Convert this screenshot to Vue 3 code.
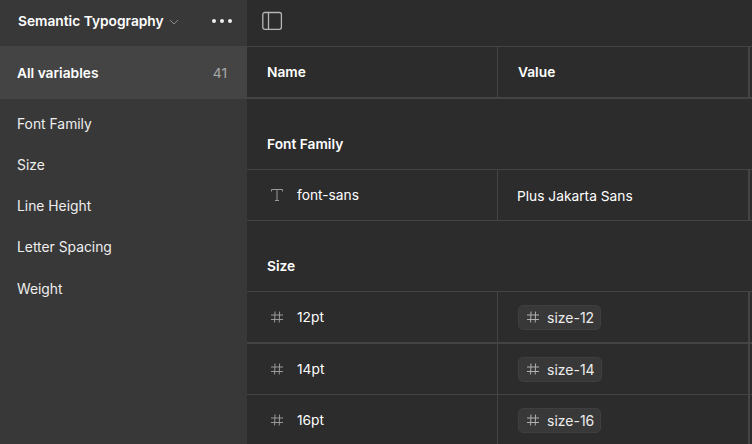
<script setup>
const groups = ['Font Family', 'Size', 'Line Height', 'Letter Spacing', 'Weight']
const sizes = [
  { name: '12pt', value: 'size-12', thick: true },
  { name: '14pt', value: 'size-14' },
  { name: '16pt', value: 'size-16' }
]
</script>

<template>
  <div class="app">
    <aside class="sidebar">
      <div class="side-head">
        <div class="collection">
          <span>Semantic Typography</span>
          <svg class="chevron" width="10" height="6" viewBox="0 0 10 6"><path d="M1 1l4 4 4-4" fill="none" stroke="#8a8a8a" /></svg>
        </div>
        <div class="dots"><i></i><i></i><i></i></div>
      </div>
      <div class="all-row">
        <span>All variables</span>
        <span class="count">41</span>
      </div>
      <nav class="groups">
        <div v-for="g in groups" :key="g" class="group-link">{{ g }}</div>
      </nav>
    </aside>

    <main class="main">
      <div class="toolbar">
        <svg width="22" height="19" viewBox="0 0 22 19" fill="none" stroke="#b5b5b5" stroke-width="1.3">
          <rect x="1.800" y="1.500" width="18.600" height="16.800" rx="2" />
          <path d="M7.500 1.500v16.800" />
        </svg>
      </div>

      <div class="row head-row">
        <div class="cell name head">Name</div>
        <div class="cell value head">Value</div>
      </div>

      <div class="section">Font Family</div>
      <div class="row">
        <div class="cell name">
          <svg class="type-icon" width="14" height="14" viewBox="0 0 14 14" fill="none" stroke="#999999">
            <path d="M1.500 3.500V1.500h11v2M7 1.500v11M5 12.500h4" />
          </svg>
          <span>font-sans</span>
        </div>
        <div class="cell value plain">Plus Jakarta Sans</div>
      </div>

      <div class="section">Size</div>
      <div v-for="s in sizes" :key="s.name" class="row" :class="{ thick: s.thick }">
        <div class="cell name">
          <svg class="type-icon" width="14" height="14" viewBox="0 0 14 14" fill="none" stroke="#999999">
            <path d="M1 5h12M1 9.500h12M5 1.500l-.4 11M9.600 1.500l-.4 11" />
          </svg>
          <span>{{ s.name }}</span>
        </div>
        <div class="cell value">
          <span class="chip">
            <svg width="14" height="14" viewBox="0 0 14 14" fill="none" stroke="#b0b0b0">
              <path d="M1 5h12M1 9.500h12M5 1.500l-.4 11M9.600 1.500l-.4 11" />
            </svg>
            {{ s.value }}
          </span>
        </div>
      </div>
    </main>
  </div>
</template>

<style>
body {
  margin: 0;
  background: #2c2c2c;
}
</style>

<style scoped>
.app {
  display: flex;
  width: 752px;
  height: 444px;
  overflow: hidden;
  font-family: Inter, "Noto Sans", sans-serif;
  font-size: 13.750px;
  color: #ffffff;
}

.sidebar {
  width: 247px;
  flex-shrink: 0;
  background: #383838;
}

.side-head {
  height: 46px;
  display: flex;
  align-items: center;
  justify-content: space-between;
  padding: 0 15px 4px 18px;
  box-sizing: border-box;
}

.collection {
  display: flex;
  align-items: center;
  gap: 5px;
  font-weight: 600;
  white-space: nowrap;
}

.chevron {
  margin-top: 1px;
}

.dots {
  display: flex;
  gap: 4px;
}

.dots i {
  width: 4px;
  height: 4px;
  border-radius: 50%;
  background: #f0f0f0;
}

.all-row {
  height: 53px;
  display: flex;
  align-items: center;
  justify-content: space-between;
  padding: 0 20px 0 17px;
  background: #444444;
  font-weight: 600;
}

.count {
  font-weight: 400;
  color: #aaaaaa;
}

.groups {
  padding-top: 4px;
}

.group-link {
  height: 41.250px;
  display: flex;
  align-items: center;
  padding-left: 17px;
  font-size: 13.850px;
  color: #eeeeee;
}

.main {
  flex: 1;
  min-width: 0;
  background: #2c2c2c;
}

.toolbar {
  height: 47px;
  display: flex;
  align-items: center;
  padding: 0 0 5px 14px;
  box-sizing: border-box;
  border-bottom: 1px solid #444444;
}

.row {
  display: flex;
  height: 51px;
  box-sizing: border-box;
  border-bottom: 1px solid #444444;
}

.row.thick,
.head-row {
  height: 52px;
  border-bottom-width: 2px;
}

.cell {
  display: flex;
  align-items: center;
  box-sizing: border-box;
}

.cell.name {
  width: 251px;
  padding-left: 20px;
  gap: 13px;
  border-right: 1px solid #444444;
}

.cell.value {
  width: 252px;
  padding-left: 20px;
  border-right: 2px solid #444444;
}

.head {
  font-weight: 600;
}

.type-icon {
  margin-left: 3px;
}

.cell.value.plain {
  padding: 2px 0 0 19px;
}

.section {
  height: 71px;
  box-sizing: border-box;
  padding: 37px 0 0 20px;
  font-weight: 600;
  border-bottom: 1px solid #444444;
}

.chip {
  display: inline-flex;
  align-items: center;
  gap: 7px;
  height: 25px;
  padding: 0 6px 0 7px;
  box-sizing: border-box;
  background: #383838;
  border: 1px solid #3f3f3f;
  border-radius: 5px;
  font-size: 14px;
  color: #ececec;
}
</style>
